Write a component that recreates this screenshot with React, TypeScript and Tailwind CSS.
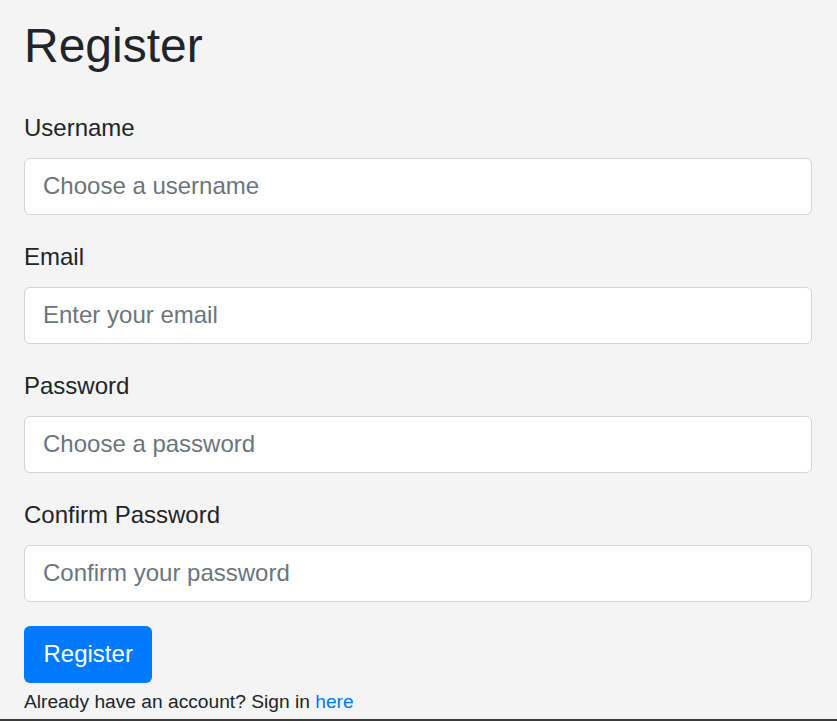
export default function App() {
  const fields = [
    { label: "Username", type: "text", placeholder: "Choose a username" },
    { label: "Email", type: "email", placeholder: "Enter your email" },
    { label: "Password", type: "password", placeholder: "Choose a password" },
    { label: "Confirm Password", type: "password", placeholder: "Confirm your password" },
  ];

  return (
    <div className="flex h-[721px] flex-col bg-[#f4f4f4] font-['Liberation_Sans',Arial,sans-serif] text-[#212529]">
      <div className="flex-1 pt-[17px] pr-[25px] pl-6">
        <h1 className="mb-[35px] text-[48px] leading-[57.6px] font-normal">Register</h1>
        <form onSubmit={(e) => e.preventDefault()}>
          {fields.map((f) => (
            <div key={f.label} className="mb-6">
              <label className="mb-3 block text-[24px] leading-[36px]">{f.label}</label>
              <input
                type={f.type}
                placeholder={f.placeholder}
                className="block h-[57px] w-full rounded-[6px] border border-[#ced4da] bg-white px-[18px] text-[24px] leading-[36px] text-[#495057] outline-none placeholder:text-[#6c757d]"
              />
            </div>
          ))}
          <button
            type="submit"
            className="h-[57px] rounded-[6px] bg-[#007bff] px-[19.5px] text-[24px] leading-[36px] text-white"
          >
            Register
          </button>
        </form>
        <p className="mt-[5px] text-[19.2px] leading-[28.8px]">
          Already have an account? Sign in{" "}
          <a href="#" className="text-[#007bff]">
            here
          </a>
        </p>
      </div>
      <div className="h-[2px] bg-[#3a3a3a]" />
    </div>
  );
}
